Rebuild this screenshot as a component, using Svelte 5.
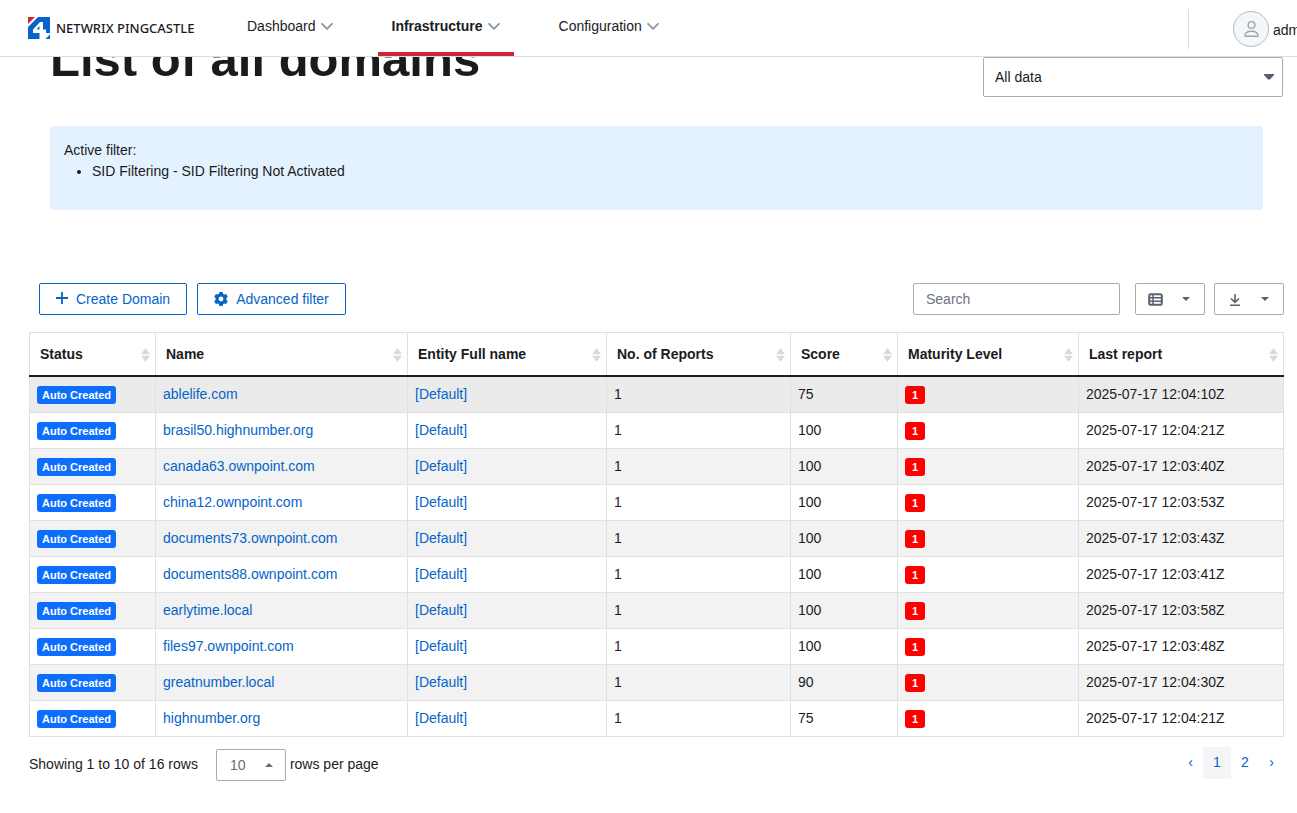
<script>
  const nav = [
    { label: 'Dashboard', active: false },
    { label: 'Infrastructure', active: true },
    { label: 'Configuration', active: false },
  ];

  const columns = [
    { title: 'Status', width: 126 },
    { title: 'Name', width: 252 },
    { title: 'Entity Full name', width: 199 },
    { title: 'No. of Reports', width: 184 },
    { title: 'Score', width: 107 },
    { title: 'Maturity Level', width: 181 },
    { title: 'Last report', width: 205 },
  ];

  const rows = [
    { name: 'ablelife.com', score: 75, date: '2025-07-17 12:04:10Z' },
    { name: 'brasil50.highnumber.org', score: 100, date: '2025-07-17 12:04:21Z' },
    { name: 'canada63.ownpoint.com', score: 100, date: '2025-07-17 12:03:40Z' },
    { name: 'china12.ownpoint.com', score: 100, date: '2025-07-17 12:03:53Z' },
    { name: 'documents73.ownpoint.com', score: 100, date: '2025-07-17 12:03:43Z' },
    { name: 'documents88.ownpoint.com', score: 100, date: '2025-07-17 12:03:41Z' },
    { name: 'earlytime.local', score: 100, date: '2025-07-17 12:03:58Z' },
    { name: 'files97.ownpoint.com', score: 100, date: '2025-07-17 12:03:48Z' },
    { name: 'greatnumber.local', score: 90, date: '2025-07-17 12:04:30Z' },
    { name: 'highnumber.org', score: 75, date: '2025-07-17 12:04:21Z' },
  ];
</script>

<header class="topbar">
  <a class="brand" href="#home">
    <svg width="22" height="22" viewBox="0 0 22 22" aria-hidden="true">
      <path d="M0 0H7L0 7Z" fill="#d1273a" />
      <path d="M10 0H22V16H18V12.5H15V5H12L5 12.5V16H11.5V22H0V10Z" fill="#0862ce" />
      <path d="M11.5 9V12.5H8.5Z" fill="#0862ce" />
      <path d="M22 17.5V22H17.5Z" fill="#0862ce" />
    </svg>
    <span>NETWRIX PINGCASTLE</span>
  </a>
  <nav>
    {#each nav as item}
      <a href="#{item.label}" class:active={item.active}>
        {item.label}
        <svg width="12" height="8" viewBox="0 0 12 8" aria-hidden="true">
          <path d="M.5 1.3L6 6.8L11.5 1.3" fill="none" stroke="#8c919f" stroke-width="1.8" />
        </svg>
      </a>
    {/each}
  </nav>
  <div class="user">
    <svg width="36" height="36" viewBox="0 0 36 36" aria-hidden="true">
      <circle cx="18" cy="18" r="17.5" fill="#f4f7f9" stroke="#b4b9bf" />
      <g fill="none" stroke="#9ca4ae" stroke-width="1.4">
        <circle cx="18.5" cy="14" r="3.4" />
        <path d="M12 25.2C12 21.8 14.3 20.3 18.5 20.3S25 21.8 25 25.2Z" stroke-linejoin="round" />
      </g>
    </svg>
    <span class="username">adm</span>
  </div>
</header>

<main>
  <div class="heading">
    <h1>List of all domains</h1>
    <div class="scope">
      <select aria-label="Data scope">
        <option>All data</option>
      </select>
      <svg width="10" height="6" viewBox="0 0 10 6" aria-hidden="true">
        <path d="M0 0H10V1L6 5.5H4L0 1Z" fill="#555c6c" />
      </svg>
    </div>
  </div>

  <section class="notice">
    Active filter:
    <ul>
      <li>SID Filtering - SID Filtering Not Activated</li>
    </ul>
  </section>

  <div class="toolbar">
    <button class="action" type="button">
      <svg width="12" height="14" viewBox="0 0 12 14" aria-hidden="true">
        <path d="M6 0V12M0 6H12" stroke="currentColor" stroke-width="1.8" />
      </svg>
      Create Domain
    </button>
    <button class="action" type="button">
      <svg width="14" height="14" viewBox="0 0 14 14" aria-hidden="true">
        <path
          fill="currentColor"
          fill-rule="evenodd"
          d="M5.4 0H8.6L9.1 1.9L10.2 2.5L12.1 1.9L13.8 4.7L12.4 6.1V7.9L13.8 9.3L12.1 12.1L10.2 11.5L9.1 12.1L8.6 14H5.4L4.9 12.1L3.8 11.5L1.9 12.1L.2 9.3L1.6 7.9V6.1L.2 4.7L1.9 1.9L3.8 2.5L4.9 1.9ZM7 4.6A2.4 2.4 0 1 0 7 9.4A2.4 2.4 0 1 0 7 4.6Z"
        />
      </svg>
      Advanced filter
    </button>
    <input class="search" type="search" placeholder="Search" aria-label="Search" />
    <div class="tools">
      <button class="tool" type="button" aria-label="Columns">
        <svg width="15" height="13" viewBox="0 0 15 13" aria-hidden="true">
          <rect x="1.2" y="1.2" width="12.6" height="10.6" rx="1.5" fill="none" stroke="currentColor" stroke-width="2" />
          <path d="M1 4.7H14M1 8.3H14M5 1V12" stroke="currentColor" stroke-width="1.5" />
        </svg>
        <svg width="8" height="4" viewBox="0 0 8 4" aria-hidden="true"><path d="M0 0H8L4 4Z" fill="currentColor" /></svg>
      </button>
      <button class="tool" type="button" aria-label="Export">
        <svg width="15" height="13" viewBox="0 0 15 13" aria-hidden="true">
          <path d="M8 1V9M4 5.5L8 9.3L12 5.5M3 12.2H13" fill="none" stroke="currentColor" stroke-width="1.6" />
        </svg>
        <svg width="8" height="4" viewBox="0 0 8 4" aria-hidden="true"><path d="M0 0H8L4 4Z" fill="currentColor" /></svg>
      </button>
    </div>
  </div>

  <table>
    <colgroup>
      {#each columns as column}
        <col style:width="{column.width}px" />
      {/each}
    </colgroup>
    <thead>
      <tr>
        {#each columns as column}
          <th scope="col">
            <div class="sortable">
              {column.title}
              <svg width="9" height="14" viewBox="0 0 9 14" aria-hidden="true">
                <path d="M4.5 0L9 6.3H0ZM0 7.7H9L4.5 14Z" fill="#d9d9dc" />
              </svg>
            </div>
          </th>
        {/each}
      </tr>
    </thead>
    <tbody>
      {#each rows as row}
        <tr>
          <td><span class="badge">Auto Created</span></td>
          <td><a href="#{row.name}">{row.name}</a></td>
          <td><a href="#default">[Default]</a></td>
          <td>1</td>
          <td>{row.score}</td>
          <td><span class="badge level">1</span></td>
          <td>{row.date}</td>
        </tr>
      {/each}
    </tbody>
  </table>

  <footer>
    <span>Showing 1 to 10 of 16 rows</span>
    <button class="tool size" type="button" aria-label="Rows per page">
      10
      <svg width="8" height="4" viewBox="0 0 8 4" aria-hidden="true"><path d="M0 4H8L4 0Z" fill="currentColor" /></svg>
    </button>
    <span>rows per page</span>
    <nav class="pages" aria-label="Pages">
      <a class="arrow" href="#previous">‹</a>
      <a class="current" href="#1">1</a>
      <a href="#2">2</a>
      <a class="arrow" href="#next">›</a>
    </nav>
  </footer>
</main>

<style>
  :global(body) {
    background: #fff;
    color: #1b1b1d;
    font: 14px/21px "Liberation Sans", Arial, sans-serif;
  }

  a {
    color: #0464c8;
    text-decoration: none;
  }

  svg {
    display: block;
    flex: none;
  }

  button,
  input,
  select {
    box-sizing: border-box;
    margin: 0;
    border: 1px solid #a9abb1;
    border-radius: 2px;
    background: #fff;
    font: inherit;
  }

  .topbar {
    position: sticky;
    top: 0;
    z-index: 2;
    display: flex;
    height: 56px;
    padding-left: 28px;
    overflow: hidden;
    border-bottom: 1px solid #dcdcdf;
    background: #fff;
  }

  .brand {
    display: flex;
    flex: 0 0 205px;
    align-items: center;
    gap: 6px;
    color: #1b1b1d;
    font: 500 13px/18px "Noto Sans", "Open Sans", sans-serif;
  }

  .topbar nav {
    display: flex;
    gap: 31px;
  }

  .topbar nav a {
    display: flex;
    align-items: center;
    gap: 5px;
    padding: 0 14px;
    border-bottom: 4px solid transparent;
    color: #1b1b1d;
  }

  .topbar nav a.active {
    border-color: #cf2637;
    font-weight: bold;
  }

  .user {
    display: flex;
    align-items: center;
    align-self: center;
    gap: 4px;
    height: 40px;
    margin: 2px 0 0 auto;
    padding-left: 44px;
    border-left: 1px solid #dcdcdf;
  }

  .username {
    width: 24px;
    padding-top: 2px;
    white-space: nowrap;
  }

  main {
    padding: 0 13px 28px 29px;
  }

  .heading {
    display: flex;
    align-items: flex-end;
    justify-content: space-between;
    margin: -28px 1px 0 21px;
  }

  h1 {
    margin: 0 0 8px;
    font-size: 49px;
    line-height: 60px;
  }

  .scope {
    display: grid;
    align-items: center;
    width: 300px;
  }

  .scope > * {
    grid-area: 1 / 1;
  }

  .scope select {
    width: 100%;
    height: 40px;
    padding: 0 11px;
    appearance: none;
    color: #1b1b1d;
  }

  .scope svg {
    justify-self: end;
    margin-right: 9px;
    pointer-events: none;
  }

  .notice {
    margin: 29px 21px 73px;
    padding: 14px;
    border-radius: 3px;
    background: #e4f2ff;
  }

  .notice ul {
    margin: 0 0 14px;
    padding-left: 28px;
  }

  .toolbar {
    display: flex;
    align-items: center;
    gap: 10px;
    margin: 0 0 17px 10px;
  }

  .action {
    display: flex;
    align-items: center;
    gap: 8px;
    height: 32px;
    padding: 0 16px;
    border-color: #0464c8;
    color: #0464c8;
  }

  .search {
    width: 207px;
    height: 32px;
    margin: 0 5px 0 auto;
    padding: 0 12px;
  }

  .search::placeholder {
    color: #6c737e;
    opacity: 1;
  }

  .tools {
    display: flex;
    gap: 9px;
  }

  .tool {
    display: flex;
    align-items: center;
    justify-content: space-between;
    width: 70px;
    height: 32px;
    padding: 0 14px 0 12px;
    color: #5a6070;
  }

  table {
    width: calc(100% - 1px);
    border-collapse: collapse;
    table-layout: fixed;
  }

  th,
  td {
    border: 1px solid #dee0e3;
    text-align: left;
  }

  th {
    padding: 11px 5px 10px 10px;
    border-bottom: 2px solid #1f1f23;
  }

  .sortable {
    display: flex;
    align-items: center;
    justify-content: space-between;
  }

  td {
    height: 21px;
    padding: 7px;
  }

  tbody tr:nth-child(odd) {
    background: #f2f2f2;
  }

  tbody tr:first-child {
    background: #ebebeb;
  }

  .badge {
    display: block;
    width: fit-content;
    margin-top: 1px;
    padding: 0 5px;
    border-radius: 3px;
    background: #0d6efd;
    color: #fff;
    font-size: 11px;
    font-weight: bold;
    line-height: 18px;
  }

  .badge.level {
    padding: 0 7px;
    background: #fe0000;
  }

  footer {
    display: flex;
    align-items: center;
    gap: 4px;
    margin-top: 10px;
  }

  footer > span {
    padding-bottom: 2px;
  }

  .size {
    margin-left: 14px;
    padding: 0 12px 0 13px;
    color: #696c75;
  }

  .pages {
    display: flex;
    margin-left: auto;
  }

  .pages a {
    width: 28px;
    margin-bottom: 4px;
    padding-bottom: 2px;
    line-height: 30px;
    text-align: center;
  }

  .pages .arrow {
    width: 25px;
  }

  .pages .current {
    background: #f4f5f6;
  }
</style>
